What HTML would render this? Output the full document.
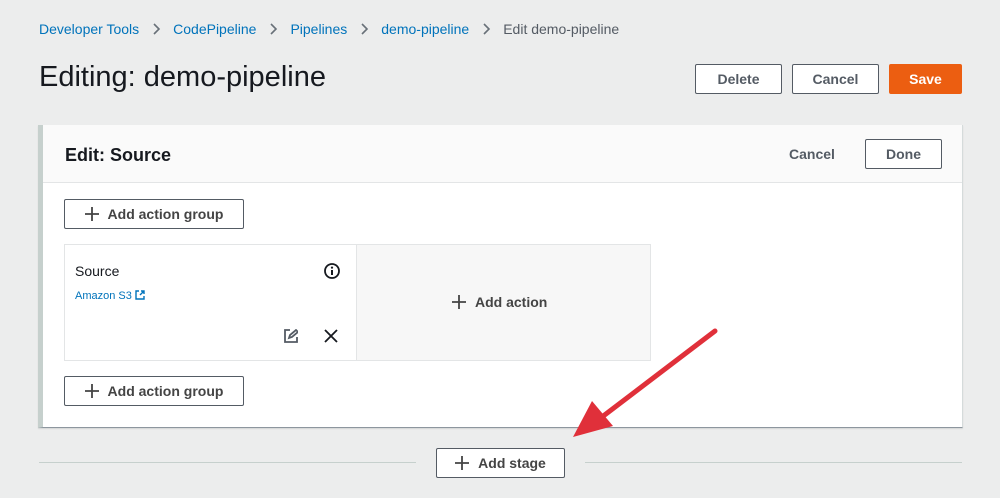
<!DOCTYPE html>
<html><head><style>
*{box-sizing:border-box;margin:0;padding:0}
body{width:1000px;height:498px;background:#eceded;font-family:"Liberation Sans",sans-serif;color:#16191f;position:relative;overflow:hidden}
.a{position:absolute}
.bc{top:21px;left:39px;font-size:14px;color:#0073bb;white-space:nowrap;display:flex;align-items:center}
.bc svg{margin:0 12px 0 14px}
.btn{position:absolute;border:1px solid #545b64;border-radius:2px;background:#fff;font-weight:bold;font-size:14px;color:#545b64;display:flex;align-items:center;justify-content:center}
.btn svg{margin-right:9px}
h1{position:absolute;left:39px;top:61px;font-size:29px;font-weight:normal;color:#16191f}
</style></head><body>
<div class="a bc"><span>Developer Tools</span><svg width="8" height="12" viewBox="0 0 8 12"><path d="M1 1l5 5-5 5" fill="none" stroke="#687078" stroke-width="1.6"/></svg><span>CodePipeline</span><svg width="8" height="12" viewBox="0 0 8 12"><path d="M1 1l5 5-5 5" fill="none" stroke="#687078" stroke-width="1.6"/></svg><span>Pipelines</span><svg width="8" height="12" viewBox="0 0 8 12"><path d="M1 1l5 5-5 5" fill="none" stroke="#687078" stroke-width="1.6"/></svg><span>demo-pipeline</span><svg width="8" height="12" viewBox="0 0 8 12"><path d="M1 1l5 5-5 5" fill="none" stroke="#687078" stroke-width="1.6"/></svg><span style="color:#545b64">Edit demo-pipeline</span></div>
<h1>Editing: demo-pipeline</h1>
<div class="btn" style="left:695px;top:64px;width:87px;height:30px">Delete</div>
<div class="btn" style="left:792px;top:64px;width:87px;height:30px">Cancel</div>
<div class="btn" style="left:889px;top:64px;width:73px;height:30px;background:#ec5e11;border-color:#ec5e11;color:#fff">Save</div>

<div class="a" style="left:38px;top:125px;width:925px;height:303px;background:#fff;border-left:5px solid #c6d0cd;border-right:1px solid #d5dbdb;border-bottom:1px solid #8d969e;box-shadow:0 1px 1px rgba(0,0,0,.1)">
  <div class="a" style="left:0;top:0;width:919px;height:58px;background:#fafafa;border-bottom:1px solid #e3e5e6"></div>
  <div class="a" style="left:22px;top:20px;font-size:18px;font-weight:bold">Edit: Source</div>
  <div class="a" style="left:746px;top:21px;font-size:14px;font-weight:bold;color:#545b64">Cancel</div>
  <div class="btn" style="left:822px;top:14px;width:77px;height:30px">Done</div>
  <div class="btn" style="left:21px;top:74px;width:180px;height:30px;color:#444"><svg width="14" height="14" viewBox="0 0 14 14"><path d="M7 0v14M0 7h14" stroke="#444" stroke-width="1.8"/></svg>Add action group</div>
  <div class="a" style="left:21px;top:119px;width:587px;height:117px;border:1px solid #e3e5e6;background:#f7f7f7">
    <div class="a" style="left:0;top:0;width:292px;height:115px;background:#fff;border-right:1px solid #e3e5e6"></div>
    <div class="a" style="left:10px;top:18px;font-size:14px">Source</div>
    <div class="a" style="left:10px;top:45px;font-size:11px;color:#0073bb">Amazon S3 <svg width="10" height="10" viewBox="0 0 10 10" style="vertical-align:-1px"><path d="M4 1H1v8h8V6M5 5l4-4M6 1h3v3" fill="none" stroke="#0073bb" stroke-width="1.4"/></svg></div>
    <svg class="a" style="left:258px;top:17px" width="18" height="18" viewBox="0 0 18 18"><circle cx="9" cy="9" r="7" fill="none" stroke="#16191f" stroke-width="1.8"/><circle cx="9" cy="5.6" r="1.1" fill="#16191f"/><path d="M9 8v5" stroke="#16191f" stroke-width="2"/></svg>
    <svg class="a" style="left:219px;top:84px" width="14" height="14" viewBox="0 0 14 14"><path d="M6 1H1v12h12V8M5 9l1-3 6-5 2 2-6 5z" fill="none" stroke="#545b64" stroke-width="1.8"/></svg>
    <svg class="a" style="left:259px;top:84px" width="14" height="14" viewBox="0 0 14 14"><path d="M1 1l12 12M13 1L1 13" stroke="#16191f" stroke-width="1.8"/></svg>
    <div class="a" style="left:387px;top:49px;font-size:14px;font-weight:bold;color:#444;display:flex;align-items:center"><svg width="14" height="14" viewBox="0 0 14 14" style="margin-right:9px"><path d="M7 0v14M0 7h14" stroke="#444" stroke-width="1.8"/></svg>Add action</div>
  </div>
  <div class="btn" style="left:21px;top:251px;width:180px;height:30px;color:#444"><svg width="14" height="14" viewBox="0 0 14 14"><path d="M7 0v14M0 7h14" stroke="#444" stroke-width="1.8"/></svg>Add action group</div>
</div>

<div class="a" style="left:39px;top:462px;width:377px;height:1px;background:#c6d0cd"></div>
<div class="a" style="left:585px;top:462px;width:377px;height:1px;background:#c6d0cd"></div>
<div class="btn" style="left:436px;top:448px;width:129px;height:30px;color:#444"><svg width="14" height="14" viewBox="0 0 14 14"><path d="M7 0v14M0 7h14" stroke="#444" stroke-width="1.8"/></svg>Add stage</div>

<svg class="a" style="left:0;top:0" width="1000" height="498"><path d="M715 331L598 420" stroke="#e0303a" stroke-width="5" stroke-linecap="round"/><path d="M573 437l19-36 21 25z" fill="#e0303a"/></svg>
</body></html>
